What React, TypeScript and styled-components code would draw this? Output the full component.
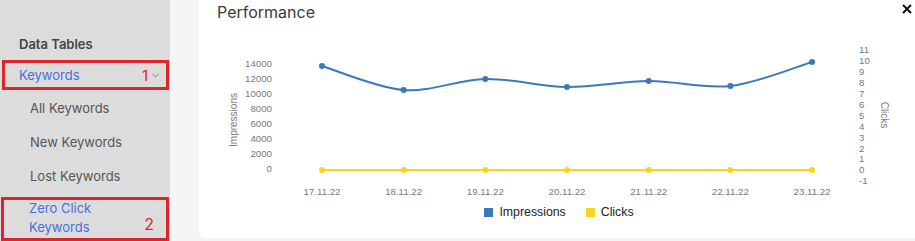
import React from "react";
import styled, { createGlobalStyle } from "styled-components";
import { ChevronDown } from "lucide-react";

const GlobalStyle = createGlobalStyle`
  html, body {
    margin: 0;
    padding: 0;
    background: #f5f5f5;
    overflow: hidden;
  }
  * {
    box-sizing: border-box;
  }
`;

const Page = styled.div`
  display: flex;
  width: 915px;
  height: 241px;
  font-family: "Inter", "Noto Sans", sans-serif;
`;

const Sidebar = styled.nav`
  width: 170px;
  flex-shrink: 0;
  background: #dcdcdc;
  padding-top: 27px;
  display: flex;
  flex-direction: column;
`;

const Heading = styled.div`
  height: 34px;
  display: flex;
  align-items: center;
  padding-left: 19px;
  font-size: 13px;
  font-weight: 600;
  color: #444;
`;

const Item = styled.div<{ $sub?: boolean; $active?: boolean; $marked?: boolean }>`
  min-height: ${(p) => (p.$marked ? "30px" : "34px")};
  display: flex;
  align-items: center;
  justify-content: space-between;
  padding-left: ${(p) => (p.$sub ? 30 : 19)}px;
  padding-top: ${(p) => (p.$marked ? 0 : 1)}px;
  font-size: 13px;
  color: ${(p) => (p.$active ? "#4a6ee0" : "#555")};
  ${(p) =>
    p.$marked &&
    `
    border: 3px solid #e3232c;
    margin: 0 1px 0 2px;
    padding-left: ${p.$sub ? 25 : 14}px;
    padding-right: 5px;
  `}
`;

const ZeroItem = styled(Item)`
  margin-top: 5px;
  margin-left: 1px;
  align-items: flex-end;
  line-height: 19px;
  padding-bottom: 1px;
`;

const Marker = styled.span<{ $size: number; $inset?: number }>`
  display: flex;
  align-items: center;
  color: #e3232c;
  font-size: ${(p) => p.$size}px;
  line-height: 1;
  padding: 0 ${(p) => p.$inset ?? 0}px ${(p) => (p.$inset ? 5 : 0)}px 0;
`;

const Caret = styled.span`
  display: flex;
  color: #777;
  margin-left: 2px;
`;

const Main = styled.main`
  flex: 1;
  background: #f5f5f5;
  padding: 0 0 3px 29px;
  display: flex;
`;

const Card = styled.section`
  flex: 1;
  background: #fff;
  border-bottom-left-radius: 6px;
  display: flex;
  flex-direction: column;
`;

const TitleRow = styled.div`
  height: 24px;
  display: flex;
  align-items: center;
  justify-content: space-between;
  padding: 0 3px 0 18px;
`;

const Title = styled.h2`
  margin: 0;
  font-size: 16px;
  font-weight: 400;
  color: #3a3a3a;
`;

const Close = styled.button`
  border: none;
  background: none;
  padding: 0;
  margin-top: -6px;
  display: flex;
  cursor: pointer;
`;

const Legend = styled.div`
  height: 20px;
  display: flex;
  align-items: center;
  justify-content: center;
  gap: 20px;
  padding-left: 4px;
  font-family: "Liberation Sans", Arial, sans-serif;
  font-size: 12.3px;
  color: #222;
`;

const LegendItem = styled.span`
  display: flex;
  align-items: center;
  gap: 6px;
`;

const Swatch = styled.span<{ $color: string }>`
  width: 9px;
  height: 9px;
  background: ${(p) => p.$color};
`;

const BLUE = "#3b79bd";
const YELLOW = "#f7d51c";

const dates = ["17.11.22", "18.11.22", "19.11.22", "20.11.22", "21.11.22", "22.11.22", "23.11.22"];
const impressions = [13640, 10460, 11920, 10860, 11660, 10990, 14170];
const clicks = [0, 0, 0, 0, 0, 0, 0];

const xAt = (i: number) => 123 + i * 81.67;
const yImp = (v: number) => 145 - v * 0.00755;
const yClk = (v: number) => 146 - v * 10.9;

function smoothPath(pts: [number, number][]) {
  let d = `M${pts[0][0]},${pts[0][1]}`;
  for (let i = 0; i < pts.length - 1; i++) {
    const p0 = pts[i - 1] || pts[i];
    const p1 = pts[i];
    const p2 = pts[i + 1];
    const p3 = pts[i + 2] || p2;
    const t = 6;
    const c1x = p1[0] + (p2[0] - p0[0]) / t;
    const c1y = p1[1] + (p2[1] - p0[1]) / t;
    const c2x = p2[0] - (p3[0] - p1[0]) / t;
    const c2y = p2[1] - (p3[1] - p1[1]) / t;
    d += ` C${c1x},${c1y} ${c2x},${c2y} ${p2[0]},${p2[1]}`;
  }
  return d;
}

const tickStyle = {
  fontFamily: "'Liberation Sans', Arial, sans-serif",
  fontSize: 9.7,
  fill: "#7a7a7a",
};

const Chart = () => {
  const impPts = impressions.map((v, i) => [xAt(i), yImp(v)] as [number, number]);
  const clkPts = clicks.map((v, i) => [xAt(i), yClk(v)] as [number, number]);
  const leftTicks = [0, 2000, 4000, 6000, 8000, 10000, 12000, 14000];
  const rightTicks = [-1, 0, 1, 2, 3, 4, 5, 6, 7, 8, 9, 10, 11];
  return (
    <svg width="716" height="178" viewBox="0 0 716 178">
      {leftTicks.map((t) => (
        <text key={t} x={73} y={yImp(t)} dy="0.35em" textAnchor="end" style={tickStyle}>
          {t}
        </text>
      ))}
      {rightTicks.map((t) => (
        <text key={t} x={660} y={yClk(t)} dy="0.35em" style={tickStyle}>
          {t}
        </text>
      ))}
      <text
        transform="translate(34,96) rotate(-90)"
        textAnchor="middle"
        dy="0.35em"
        style={{ ...tickStyle, fontSize: 10 }}
      >
        Impressions
      </text>
      <text
        transform="translate(685,91) rotate(90)"
        textAnchor="middle"
        dy="0.35em"
        style={{ ...tickStyle, fontSize: 10 }}
      >
        Clicks
      </text>
      {dates.map((d, i) => (
        <text key={d} x={xAt(i)} y={168} dy="0.35em" textAnchor="middle" style={tickStyle}>
          {d}
        </text>
      ))}
      <path d={smoothPath(clkPts)} fill="none" stroke={YELLOW} strokeWidth={2} />
      {clkPts.map(([x, y], i) => (
        <circle key={i} cx={x} cy={y} r={3} fill={YELLOW} />
      ))}
      <path d={smoothPath(impPts)} fill="none" stroke={BLUE} strokeWidth={2} />
      {impPts.map(([x, y], i) => (
        <circle key={i} cx={x} cy={y} r={3} fill={BLUE} />
      ))}
    </svg>
  );
};

export default function App() {
  return (
    <>
      <GlobalStyle />
      <Page>
        <Sidebar>
          <Heading>Data Tables</Heading>
          <Item $active $marked>
            Keywords
            <Marker $size={15}>
              1
              <Caret>
                <ChevronDown size={11} strokeWidth={2} />
              </Caret>
            </Marker>
          </Item>
          <Item $sub>All Keywords</Item>
          <Item $sub>New Keywords</Item>
          <Item $sub>Lost Keywords</Item>
          <ZeroItem $sub $active $marked>
            <span>
              Zero Click
              <br />
              Keywords
            </span>
            <Marker $size={16} $inset={7}>
              2
            </Marker>
          </ZeroItem>
        </Sidebar>
        <Main>
          <Card>
            <TitleRow>
              <Title>Performance</Title>
              <Close aria-label="Close">
                <svg width="10" height="10" viewBox="0 0 10 10">
                  <path d="M1 1L9 9M9 1L1 9" stroke="#111" strokeWidth="2" />
                </svg>
              </Close>
            </TitleRow>
            <Chart />
            <Legend>
              <LegendItem>
                <Swatch $color={BLUE} />
                Impressions
              </LegendItem>
              <LegendItem>
                <Swatch $color={YELLOW} />
                Clicks
              </LegendItem>
            </Legend>
          </Card>
        </Main>
      </Page>
    </>
  );
}
